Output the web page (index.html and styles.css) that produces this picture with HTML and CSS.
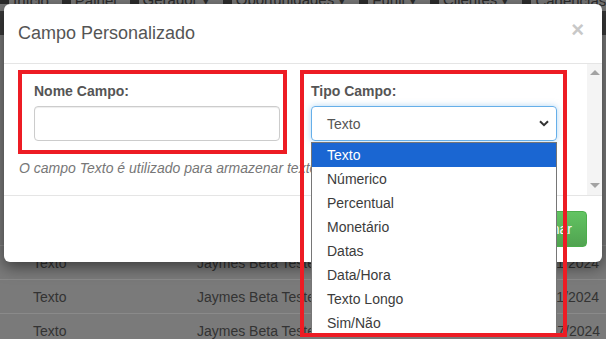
FILE: index.html
```html
<!DOCTYPE html>
<html lang="pt-BR">
<head>
    <meta charset="UTF-8">
    <meta name="viewport" content="width=device-width, initial-scale=1.0">
    <title>Campo Personalizado</title>
    <link rel="stylesheet" href="styles.css">
</head>
<body>
    <div class="page">
        <div class="navbar">
            <span class="nav-item"><i class="ico"></i>Início</span>
            <span class="nav-item"><i class="ico"></i>Painel</span>
            <span class="nav-item"><i class="ico"></i>Gerador &#9662;</span>
            <span class="nav-item"><i class="ico"></i>Oportunidades &#9662;</span>
            <span class="nav-item"><i class="ico"></i>Funil &#9662;</span>
            <span class="nav-item"><i class="ico"></i>Clientes &#9662;</span>
            <span class="nav-item"><i class="ico"></i>Cadências</span>
        </div>
        <div class="subbar"></div>
        <div class="content">
            <div class="table-row"><span class="c1">Texto</span><span class="c2">Jaymes Beta Teste</span><span class="c3">10/11/2024</span></div>
            <div class="table-row"><span class="c1">Texto</span><span class="c2">Jaymes Beta Teste</span><span class="c3">10/11/2024</span></div>
            <div class="table-row"><span class="c1">Texto</span><span class="c2">Jaymes Beta Teste</span><span class="c3">10/07/2024</span></div>
        </div>
    </div>

    <div class="modal">
        <div class="modal-header">
            <h4 class="modal-title">Campo Personalizado</h4>
            <span class="close">&times;</span>
        </div>

        <div class="modal-main">
            <div class="modal-body">
                <div class="form-row">
                    <div class="form-group">
                        <label>Nome Campo:</label>
                        <div class="input"></div>
                    </div>
                    <div class="form-group select-group">
                        <label>Tipo Campo:</label>
                        <div class="select">
                            <span>Texto</span>
                            <svg width="10" height="7" viewBox="0 0 10 7"><path d="M1 1.2 L5 5.2 L9 1.2" fill="none" stroke="#333" stroke-width="2"/></svg>
                        </div>
                        <ul class="options">
                            <li class="selected">Texto</li>
                            <li>Númerico</li>
                            <li>Percentual</li>
                            <li>Monetário</li>
                            <li>Datas</li>
                            <li>Data/Hora</li>
                            <li>Texto Longo</li>
                            <li>Sim/Não</li>
                        </ul>
                    </div>
                </div>
                <p class="help">O campo Texto é utilizado para armazenar textos curtos.</p>
            </div>
            <div class="scrollbar">
                <span class="arrow up"></span>
                <span class="arrow down"></span>
            </div>
        </div>

        <div class="modal-footer">
            <button class="btn-success">Adicionar</button>
        </div>

        <div class="mark mark-nome"></div>
        <div class="mark mark-tipo"></div>
    </div>
</body>
</html>
```

FILE: styles.css
```css
body {
    margin: 0;
    width: 606px;
    height: 339px;
    overflow: hidden;
    position: relative;
    font-family: "Liberation Sans", Arial, sans-serif;
    background: #7a7a7a;
}

/* pagina por tras do modal (escurecida) */
.page {
    height: 339px;
    overflow: hidden;
}

.navbar {
    margin-top: -11px;
    height: 22px;
    display: flex;
    align-items: center;
    gap: 13px;
    font-size: 15px;
    color: #2c2c2c;
    background: #777;
    white-space: nowrap;
}

.nav-item {
    display: flex;
    align-items: center;
    gap: 4px;
}

.ico {
    display: inline-block;
    width: 9px;
    height: 8px;
    background: #2c2c2c;
}

.subbar {
    height: 24px;
    background: #3a3a3a;
}

.content {
    padding-top: 210px;
}

.table-row {
    display: flex;
    height: 33px;
    align-items: center;
    border-top: 1px solid #8a8a8a;
    font-size: 14px;
    color: #333;
    white-space: nowrap;
}

.c1 { width: 164px; padding-left: 33px; }
.c2 { width: 333px; }

/* modal */
.modal {
    position: absolute;
    left: 4px;
    top: 4px;
    width: 598px;
    height: 258px;
    background: #fff;
    border-radius: 6px;
    box-shadow: 0 5px 15px rgba(0, 0, 0, 0.5);
}

.modal-header {
    height: 60px;
    box-sizing: border-box;
    border-bottom: 1px solid #e5e5e5;
    display: flex;
    justify-content: space-between;
    align-items: flex-start;
    padding: 16px 18px 0 14px;
}

.modal-title {
    margin: 0;
    font-size: 18px;
    font-weight: normal;
    line-height: 26px;
    color: #555;
}

.close {
    font-size: 22px;
    font-weight: bold;
    line-height: 22px;
    color: #c8c8c8;
    margin-top: -1px;
}

.modal-main {
    display: flex;
    height: 131px;
}

.modal-body {
    flex: 1;
    padding: 17px 0 0 15px;
}

.form-row {
    display: flex;
    gap: 31px;
    padding-left: 15px;
}

.form-group {
    width: 246px;
}

.select-group {
    position: relative;
    z-index: 2;
}

label {
    display: block;
    font-size: 14px;
    font-weight: bold;
    line-height: 20px;
    color: #555;
    margin-bottom: 5px;
}

.input {
    height: 35px;
    box-sizing: border-box;
    border: 1px solid #ccc;
    border-radius: 4px;
    box-shadow: inset 0 1px 1px rgba(0, 0, 0, 0.075);
}

.select {
    height: 35px;
    box-sizing: border-box;
    border: 1px solid #66afe9;
    border-radius: 4px;
    box-shadow: 0 0 6px rgba(102, 175, 233, 0.5);
    display: flex;
    align-items: center;
    justify-content: space-between;
    padding: 0 7px 0 15px;
    font-size: 14px;
    color: #555;
}

.options {
    position: absolute;
    top: 61px;
    left: 0;
    width: 246px;
    box-sizing: border-box;
    margin: 0;
    padding: 0;
    list-style: none;
    background: #fff;
    border: 1px solid #767676;
}

.options li {
    height: 24px;
    line-height: 24px;
    padding-left: 15px;
    font-size: 14px;
    color: #3c3c3c;
}

.options .selected {
    background: #1a66d2;
    color: #fff;
}

.help {
    margin: 17px 0 0 0;
    font-size: 14px;
    font-style: italic;
    line-height: 20px;
    color: #777;
}

.scrollbar {
    width: 15px;
    background: #f4f4f4;
    display: flex;
    flex-direction: column;
    justify-content: space-between;
    align-items: center;
    padding: 6px 0 7px;
    box-sizing: border-box;
}

.arrow {
    width: 0;
    height: 0;
    border-left: 5px solid transparent;
    border-right: 5px solid transparent;
}

.arrow.up { border-bottom: 5px solid #a3a3a3; }
.arrow.down { border-top: 5px solid #a3a3a3; }

.modal-footer {
    border-top: 1px solid #e5e5e5;
    padding: 15px;
    display: flex;
    justify-content: flex-end;
}

.btn-success {
    height: 36px;
    padding: 0 14px;
    font-family: inherit;
    font-size: 14px;
    color: #fff;
    background: linear-gradient(#62c462, #51a351);
    border: 1px solid #4cae4c;
    border-radius: 4px;
}

/* marcacoes vermelhas da captura */
.mark {
    position: absolute;
    border: 4px solid #ed1c24;
    box-sizing: border-box;
    z-index: 3;
}

.mark-nome {
    left: 14px;
    top: 66px;
    width: 269px;
    height: 84px;
}

.mark-tipo {
    left: 296px;
    top: 66px;
    width: 267px;
    height: 267px;
}
```
